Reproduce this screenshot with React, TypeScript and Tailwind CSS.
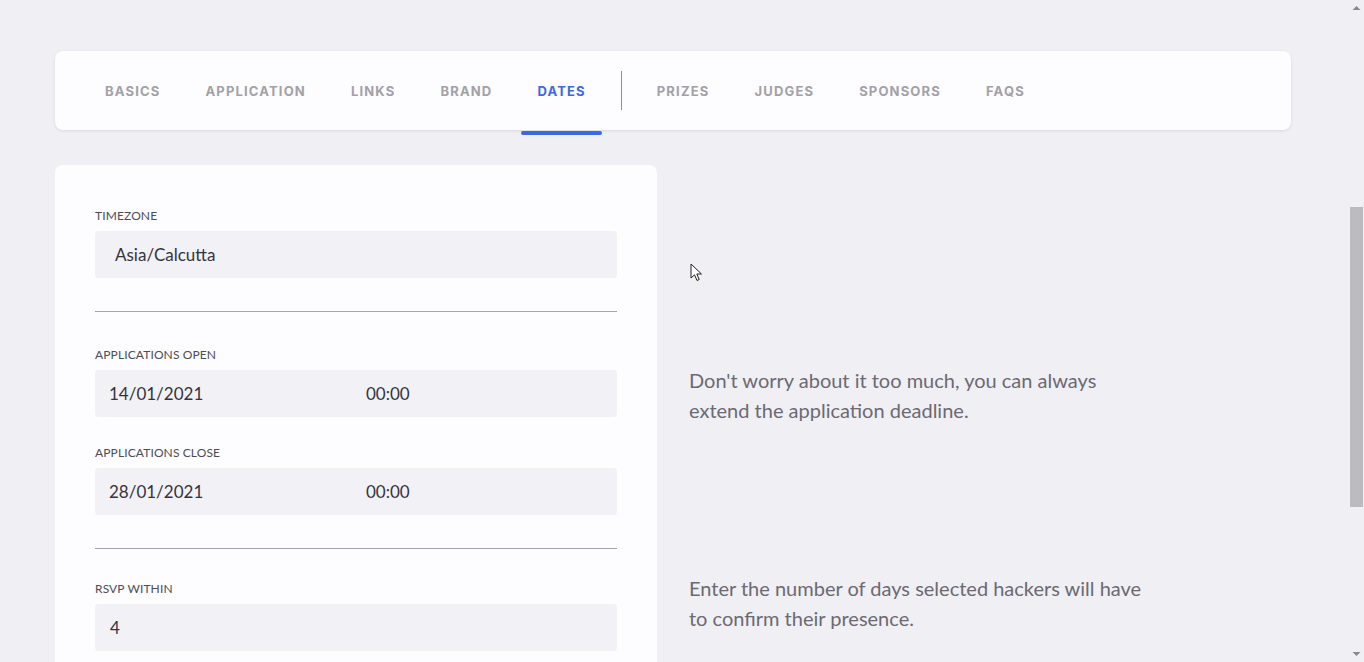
import React from "react";

const tabs = ["Basics", "Application", "Links", "Brand", "Dates"];
const moreTabs = ["Prizes", "Judges", "Sponsors", "Faqs"];

function Tab({ label, active = false }: { label: string; active?: boolean }) {
  return (
    <div className="relative flex items-center px-4 pt-[3px]">
      <span
        className={
          "font-['Inter',sans-serif] text-[13px] font-bold uppercase tracking-[0.09em] " +
          (active ? "text-[#3c69df]" : "text-[#a2a1a8]")
        }
      >
        {label}
      </span>
      {active && <span className="absolute -bottom-[5px] left-0 right-0 h-[4px] rounded-full bg-[#3c69df]" />}
    </div>
  );
}

function Field({ label, children, className = "" }: { label: string; children: React.ReactNode; className?: string }) {
  return (
    <div className={className}>
      <p className="text-[12px] uppercase leading-4 tracking-[0.01em] text-[#4d4c55]">{label}</p>
      <div className="mt-[7px] flex h-[47px] items-center rounded-[4px] bg-[#f2f1f5] text-[17px] text-[#35343d]">
        {children}
      </div>
    </div>
  );
}

function Cursor() {
  return (
    <svg className="absolute left-[690px] top-[263px]" width="13" height="19" viewBox="0 0 13 19">
      <path d="M1 1 L1 15 L4.5 11.8 L7 17.5 L9.2 16.5 L6.8 11 L11.5 11 Z" fill="#fff" stroke="#222" strokeWidth="1" strokeLinejoin="round" />
    </svg>
  );
}

export default function App() {
  return (
    <div className="flex h-[662px] w-[1364px] overflow-hidden bg-[#f0eff4] font-['Lato',sans-serif]">
      <div className="relative flex-1 pl-[55px] pt-[51px]">
        <nav className="flex h-[79px] w-[1236px] items-stretch gap-[13px] rounded-[8px] bg-[#fdfcfe] pl-[34px] shadow-[0_1px_3px_rgba(60,60,80,0.12)]">
          {tabs.map((t) => (
            <Tab key={t} label={t} active={t === "Dates"} />
          ))}
          <div className="mx-[6px] my-[20px] w-px bg-[#8f8e95]" />
          {moreTabs.map((t) => (
            <Tab key={t} label={t} />
          ))}
        </nav>

        <div className="mt-[35px] flex gap-[32px]">
          <section className="h-[600px] w-[602px] rounded-t-[8px] bg-[#fdfcfe] px-[40px] pt-[43px]">
            <Field label="Timezone">
              <span className="pl-[20px]">Asia/Calcutta</span>
            </Field>
            <div className="mt-[33px] h-px bg-[#a6a5ab]" />

            <Field label="Applications open" className="mt-[35px]">
              <span className="w-[271px] pl-[14px]">14/01/2021</span>
              <span>00:00</span>
            </Field>
            <Field label="Applications close" className="mt-[28px]">
              <span className="w-[271px] pl-[14px]">28/01/2021</span>
              <span>00:00</span>
            </Field>
            <div className="mt-[33px] h-px bg-[#a6a5ab]" />

            <Field label="RSVP within" className="mt-[32px]">
              <span className="pl-[15px]">4</span>
            </Field>
          </section>

          <aside className="w-[462px] text-[20px] leading-[30px] text-[#6b6a72]">
            <p className="mt-[200px]">Don't worry about it too much, you can always extend the application deadline.</p>
            <p className="mt-[148px]">Enter the number of days selected hackers will have to confirm their presence.</p>
          </aside>
        </div>
        <Cursor />
      </div>

      <div className="flex w-[15px] flex-col items-center bg-[#f0eff4]">
        <svg width="9" height="6" viewBox="0 0 9 6" className="mt-[5px]">
          <path d="M0.5 5 L4.5 1 L8.5 5 Z" fill="#8a8a8a" />
        </svg>
        <div className="mt-[196px] h-[300px] w-[13px] bg-[#bcbbc0]" />
        <div className="flex-1" />
        <svg width="9" height="6" viewBox="0 0 9 6" className="mb-[5px]">
          <path d="M0.5 1 L4.5 5 L8.5 1 Z" fill="#8a8a8a" />
        </svg>
      </div>
    </div>
  );
}
